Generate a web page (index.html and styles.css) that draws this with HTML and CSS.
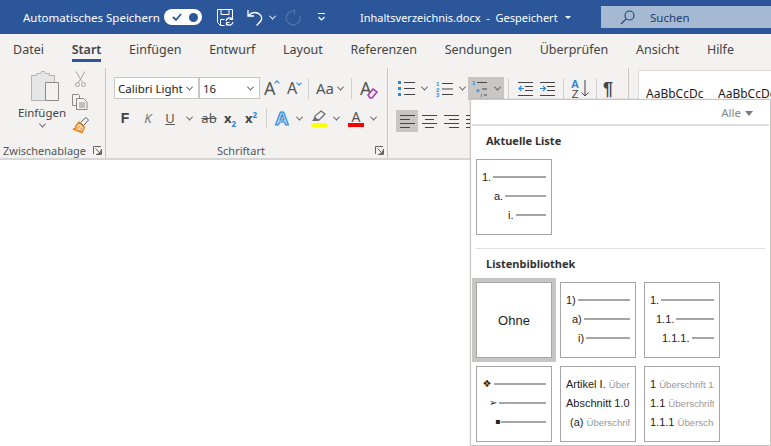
FILE: index.html
```html
<!DOCTYPE html>
<html lang="de">
<head>
    <meta charset="UTF-8">
    <title>Inhaltsverzeichnis.docx</title>
    <link rel="stylesheet" href="styles.css">
</head>
<body>
<div class="titlebar">
    <span class="autosave">Automatisches Speichern</span>
    <span class="toggle">
        <svg width="12" height="10" viewBox="0 0 12 10"><path d="M2 5l3 3 5-6" fill="none" stroke="#2b579a" stroke-width="1.8"/></svg>
        <i class="toggle-dot"></i>
    </span>
    <svg class="qa-save" width="17" height="17" viewBox="0 0 17 17" fill="none" stroke="#fff"><path d="M.5.5h15v8M.5.5v13l3 3h4M4 .5v5h8v-5M3.500 16.500v-6h4"/><path d="M9 12a3.500 3.500 0 0 1 6-2M16 13a3.500 3.500 0 0 1-6 2M15.500 7.500v3h-3M9.500 16.500v-3h3" stroke-width="1.200"/></svg>
    <svg class="qa-undo" width="18" height="17" viewBox="0 0 18 17" fill="none" stroke="#fff" stroke-width="1.300"><path d="M1 1v6h6M1.500 6.500c2-2 4-3 6-3 4 0 8 3 7 7-.5 2-3 4-5 6"/></svg>
    <i class="chev chev-white qa-undo-chev"></i>
    <svg class="qa-redo" width="17" height="17" viewBox="0 0 17 17" fill="none" stroke="#4f74ab" stroke-width="1.300"><path d="M10 2a7 7 0 1 0 6 5M10.500 .5v5"/></svg>
    <svg class="qa-more" width="9" height="8" viewBox="0 0 9 8" fill="none" stroke="#fff"><path d="M1 .5h7M1.500 4l3 3 3-3" stroke-width="1.200"/></svg>
    <span class="doc-name">Inhaltsverzeichnis.docx&nbsp; -&nbsp; Gespeichert</span>
    <i class="caret caret-white"></i>
    <div class="search">
        <svg width="15" height="15" viewBox="0 0 15 15" fill="none" stroke="#1f3d6e" stroke-width="1.100"><circle cx="9.500" cy="5.500" r="4.500"/><path d="M6.200 8.800L1 14"/></svg>
        <span>Suchen</span>
    </div>
</div>

<ul class="tabs">
    <li>Datei</li>
    <li class="active">Start</li>
    <li>Einfügen</li>
    <li>Entwurf</li>
    <li>Layout</li>
    <li>Referenzen</li>
    <li>Sendungen</li>
    <li>Überprüfen</li>
    <li>Ansicht</li>
    <li>Hilfe</li>
</ul>

<div class="ribbon">
    <section class="group group-clip">
        <div class="clip-body">
            <div class="paste">
                <svg class="paste-icon" width="28" height="30" viewBox="0 0 28 30"><path d="M.5 4.500h5v-2h4l1-2h3l1 2h4v2h5v25H.5z" fill="#e6e6e6" stroke="#b3b3b3"/><path d="M14.500 11.500h13v18h-13z" fill="#f3f2f1" stroke="#8c8c8c"/></svg>
                <span class="paste-label">Einfügen</span>
                <i class="chev"></i>
            </div>
            <div class="clip-tools">
                <svg width="11" height="16" viewBox="0 0 11 16" fill="none" stroke="#a6a6a6"><path d="M1 .5l6.500 11M10 .5L3.500 11.500"/><circle cx="2.500" cy="13.500" r="2"/><circle cx="8.500" cy="13.500" r="2"/></svg>
                <svg width="16" height="16" viewBox="0 0 16 16" fill="none" stroke="#8a8a8a"><path d="M.5.500h6l1 1v3M.5.500v11h4"/><path d="M4.500 4.500h7l3.500 3.500v7.500H4.500zM7 9h6M7 11h6M7 13h6" fill="#f3f2f1"/></svg>
                <svg width="17" height="17" viewBox="0 0 17 17"><path d="M14 .5l2.500 2.500-5 5.500-3-3z" fill="#fff" stroke="#555"/><path d="M7 5l5.500 5.500-2.500 5L1 12c2.500 0 3.500-1 2.500-2.500z" fill="#fcd9ac" stroke="#e8801a" stroke-width="1.400"/><path d="M4.500 12l3-3M7.500 14l2.500-3" stroke="#e8801a"/></svg>
            </div>
        </div>
        <div class="group-label label-clip">
            <span>Zwischenablage</span>
            <svg class="launcher" width="9" height="9" viewBox="0 0 9 9" fill="none" stroke="#666"><path d="M.5 8V.5H8M8.500 3v5.500H3M2.500 2.500l5 5M7.500 4.500v3h-3"/></svg>
        </div>
    </section>

    <section class="group group-font">
        <div class="row font-row1">
            <div class="combo combo-font">Calibri Light<i class="chev"></i></div>
            <div class="combo combo-size">16<i class="chev"></i></div>
            <span class="glyph glyph-big grow">A<i class="tick up"></i></span>
            <span class="glyph glyph-mid shrink">A<i class="tick down"></i></span>
            <i class="sep sep-case"></i>
            <span class="glyph glyph-case">Aa</span><i class="chev"></i>
            <i class="sep sep-clear"></i>
            <span class="glyph glyph-clear">A
                <svg class="eraser" width="11" height="11" viewBox="0 0 11 11"><path d="M1 7l5-6 4 3-5 6H3z" fill="#f3e6f5" stroke="#a33aa8" stroke-width="1.500"/></svg>
            </span>
        </div>
        <div class="row font-row2">
            <b class="fmt fmt-f">F</b>
            <span class="fmt fmt-k">K</span>
            <span class="fmt fmt-u">U</span><i class="chev"></i>
            <span class="fmt fmt-s">ab</span>
            <span class="fmt fmt-x"><b>x</b><sub>2</sub></span>
            <span class="fmt fmt-x"><b>x</b><sup>2</sup></span>
            <i class="sep sep-fx"></i>
            <span class="fx-a">A</span><i class="chev"></i>
            <span class="swatch swatch-yellow">
                <svg width="16" height="13" viewBox="0 0 16 13"><path d="M10 1l4 3-6 6H3l1-4z" fill="none" stroke="#707070" stroke-width="1.300"/><path d="M1 11h6l1-1-4-3z" fill="#707070"/></svg>
            </span><i class="chev"></i>
            <span class="swatch swatch-red"><span class="swatch-a">A</span></span><i class="chev"></i>
        </div>
        <div class="group-label label-font">
            <span>Schriftart</span>
            <svg class="launcher" width="9" height="9" viewBox="0 0 9 9" fill="none" stroke="#666"><path d="M.5 8V.5H8M8.500 3v5.500H3M2.500 2.500l5 5M7.500 4.500v3h-3"/></svg>
        </div>
    </section>

    <section class="group group-para">
        <div class="row para-row1">
            <svg width="17" height="15" viewBox="0 0 17 15"><path d="M0 0h3v3H0zM0 6h3v3H0zM0 12h3v3H0z" fill="#2b88d8"/><path d="M6 1.500h11M6 7.500h11M6 13.500h11" stroke="#444"/></svg>
            <i class="chev chev-bullet"></i>
            <svg class="list-svg" width="17" height="16" viewBox="0 0 17 16"><text x="0" y="5">1</text><text x="0" y="10.500">2</text><text x="0" y="16">3</text><path d="M6 2.500h11M6 8h11M6 13.500h11" stroke="#444"/></svg>
            <i class="chev chev-num"></i>
            <span class="multi">
                <svg class="list-svg" width="17" height="18" viewBox="0 0 17 18"><text x="1" y="5">1</text><text x="5" y="11.500">a</text><text x="9.500" y="17">i</text><path d="M6 2.500h10M11 9h5M13 15h3" stroke="#444"/></svg>
                <i class="chev"></i>
            </span>
            <i class="sep sep-multi"></i>
            <svg width="15" height="14" viewBox="0 0 15 14"><path d="M0 .5h15M7 4.500h8M7 8.500h8M0 13.500h15" stroke="#444"/><path d="M1 6.500h5M3.500 4L1 6.500 3.500 9" fill="none" stroke="#2b88d8" stroke-width="1.200"/></svg>
            <svg class="indent-more" width="15" height="14" viewBox="0 0 15 14"><path d="M0 .5h15M7 4.500h8M7 8.500h8M0 13.500h15" stroke="#444"/><path d="M0 6.500h5M3 4l2.500 2.500L3 9" fill="none" stroke="#2b88d8" stroke-width="1.200"/></svg>
            <i class="sep sep-sort"></i>
            <span class="sort"><span class="sort-a">A</span><span class="sort-z">Z</span></span>
            <svg class="sort-arrow" width="8" height="17" viewBox="0 0 8 17" fill="none" stroke="#444"><path d="M4 0v16M.5 12.500L4 16l3.500-3.500"/></svg>
            <i class="sep sep-pil"></i>
            <span class="pilcrow">¶</span>
        </div>
        <div class="row para-row2">
            <span class="align align-on"><svg width="15" height="13" viewBox="0 0 15 13"><path d="M0 .5h15M0 4.500h10M0 8.500h15M0 12.500h10" stroke="#444"/></svg></span>
            <span class="align"><svg width="15" height="13" viewBox="0 0 15 13"><path d="M0 .5h15M3 4.500h9M0 8.500h15M3 12.500h9" stroke="#444"/></svg></span>
            <span class="align"><svg width="15" height="13" viewBox="0 0 15 13"><path d="M0 .5h15M5 4.500h10M0 8.500h15M5 12.500h10" stroke="#444"/></svg></span>
            <span class="align"><svg width="15" height="13" viewBox="0 0 15 13"><path d="M0 .5h15M0 4.500h15M0 8.500h15M0 12.500h15" stroke="#444"/></svg></span>
        </div>
    </section>

    <section class="gallery">
        <span>AaBbCcDc</span>
        <span>AaBbCcDc</span>
    </section>
</div>

<div class="panel">
    <div class="panel-head">Alle<i class="caret caret-grey"></i></div>
    <h3>Aktuelle Liste</h3>
    <div class="tiles">
        <div class="tile">
            <div class="ln"><span>1.</span><i></i></div>
            <div class="ln l2"><span>a.</span><i></i></div>
            <div class="ln l3"><span>i.</span><i></i></div>
        </div>
    </div>
    <div class="panel-sep"></div>
    <h3 class="lib-title">Listenbibliothek</h3>
    <div class="tiles tiles-lib">
        <div class="tile tile-none">Ohne</div>
        <div class="tile">
            <div class="ln"><span>1)</span><i></i></div>
            <div class="ln l-a"><span>a)</span><i></i></div>
            <div class="ln l-i"><span>i)</span><i></i></div>
        </div>
        <div class="tile">
            <div class="ln"><span>1.</span><i></i></div>
            <div class="ln l-11"><span>1.1.</span><i></i></div>
            <div class="ln l-111"><span>1.1.1.</span><i></i></div>
        </div>
        <div class="tile">
            <div class="ln"><span class="bul bul-d">❖</span><i></i></div>
            <div class="ln l-arrow"><span class="bul bul-a">➢</span><i></i></div>
            <div class="ln l-sq"><span class="bul bul-s">▪</span><i></i></div>
        </div>
        <div class="tile">
            <div class="ln"><span class="clip">Artikel I. <em>Überschrift</em></span></div>
            <div class="ln"><span class="clip">Abschnitt 1.01</span></div>
            <div class="ln l-par"><span class="clip">(a) <em>Überschrift</em></span></div>
        </div>
        <div class="tile">
            <div class="ln"><span class="clip">1 <em>Überschrift 1-</em></span></div>
            <div class="ln"><span class="clip">1.1 <em>Überschrift</em></span></div>
            <div class="ln"><span class="clip">1.1.1 <em>Überschrift</em></span></div>
        </div>
    </div>
</div>
</body>
</html>
```

FILE: styles.css
```css
* {
    margin: 0;
    padding: 0;
    box-sizing: border-box;
    list-style: none;
}

body {
    width: 771px;
    height: 446px;
    overflow: hidden;
    position: relative;
    background: #fff;
    font-family: "Noto Sans", "Open Sans", sans-serif;
    font-size: 11.500px;
    color: #444;
}

/* title bar */
.titlebar {
    height: 34px;
    background: #2b579a;
    color: #fff;
    display: flex;
    align-items: center;
    padding-left: 23px;
}

.autosave {
    width: 141px;
    white-space: nowrap;
}

.toggle {
    width: 38px;
    height: 16px;
    border-radius: 8px;
    background: #fff;
    display: flex;
    align-items: center;
    justify-content: space-between;
    padding: 0 4px 0 7px;
}

.toggle-dot {
    width: 9px;
    height: 9px;
    border-radius: 50%;
    background: #2b579a;
}

.qa-save { margin-left: 15px; }
.qa-undo { margin-left: 13px; }
.qa-undo-chev { margin-left: 5px; }
.qa-redo { margin-left: 9px; }
.qa-more { margin-left: 16px; }

.doc-name {
    margin-left: 34px;
    white-space: nowrap;
    font-size: 11px;
}

.search {
    position: absolute;
    left: 601px;
    top: 6px;
    width: 170px;
    height: 22px;
    background: #a5b9d3;
    color: #1f3d6e;
    display: flex;
    align-items: center;
    gap: 15px;
    padding-left: 19px;
}

/* small arrows */
.chev {
    display: inline-block;
    flex: none;
    width: 5px;
    height: 5px;
    border-right: 1px solid #555;
    border-bottom: 1px solid #555;
    transform: rotate(45deg) translate(-1px, -1px);
}

.chev-white { border-color: #fff; }

.caret {
    display: inline-block;
    width: 0;
    height: 0;
}

.caret-white {
    border-left: 3px solid transparent;
    border-right: 3px solid transparent;
    border-top: 3px solid #fff;
    margin-left: 7px;
}

.caret-grey {
    border-left: 4px solid transparent;
    border-right: 4px solid transparent;
    border-top: 5px solid #7a7a7a;
    margin-left: 4px;
    vertical-align: 1px;
}

/* tabs */
.tabs {
    height: 32px;
    background: #f3f2f1;
    display: flex;
    padding-left: 13px;
    gap: 27.700px;
    font-size: 12.500px;
}

.tabs li {
    line-height: 31px;
    height: 28px;
    white-space: nowrap;
}

.tabs .active {
    font-weight: 600;
    border-bottom: 3px solid #2b579a;
}

/* ribbon */
.ribbon {
    height: 94px;
    background: #f3f2f1;
    border-bottom: 2px solid #d8d6d4;
    display: flex;
}

.group {
    position: relative;
    border-right: 1px solid #c8c6c4;
    margin-top: 2px;
    flex: none;
}

.group-clip { width: 106px; }
.group-font { width: 282px; padding: 9px 0 0 8px; }
.group-para { width: 241px; padding: 9px 0 0 8px; }

.clip-body {
    display: flex;
    padding: 3px 0 0 18px;
    gap: 5px;
}

.paste {
    width: 48px;
    display: flex;
    flex-direction: column;
    align-items: center;
}

.paste-icon { margin-left: 5px; }
.paste-label { margin-top: 4px; }
.paste .chev { margin-top: 3px; }

.clip-tools {
    display: flex;
    flex-direction: column;
    align-items: center;
    gap: 7px;
    width: 18px;
}

.group-label {
    position: absolute;
    bottom: 0;
    left: 0;
    right: 0;
    height: 15px;
    line-height: 15px;
    font-size: 11px;
    color: #555;
}

.label-clip { padding-left: 3px; }
.label-font { text-align: center; padding-right: 11px; }

.launcher {
    position: absolute;
    right: 3px;
    top: 3px;
}

.row {
    display: flex;
    align-items: center;
}

.font-row1 { height: 22px; }

.combo {
    height: 22px;
    background: #fff;
    border: 1px solid #c8c6c4;
    display: flex;
    align-items: center;
    justify-content: space-between;
    padding: 0 6px 0 3px;
    font-size: 11.500px;
    color: #222;
}

.combo-font { width: 85px; }
.combo-size { width: 61px; }

.glyph {
    position: relative;
    color: #555;
    line-height: 1;
    display: inline-block;
}

.glyph-big { font-size: 18px; margin-left: 4px; width: 23px; }
.glyph-mid { font-size: 16px; width: 21px; }
.glyph-case { font-size: 15px; margin-right: 4px; }
.glyph-clear { font-size: 18px; width: 17px; }

.tick {
    position: absolute;
    top: 2px;
    left: 11px;
    width: 4px;
    height: 4px;
    border-left: 1px solid #2b88d8;
    border-top: 1px solid #2b88d8;
    transform: rotate(45deg);
}

.tick.down { transform: rotate(225deg); top: 1px; left: 10px; }

.eraser {
    position: absolute;
    left: 7px;
    top: 9px;
}

.sep {
    display: inline-block;
    flex: none;
    width: 1px;
    height: 21px;
    background: #d2d0ce;
}

.sep-case { margin-right: 7px; }
.sep-clear { margin: 0 8px 0 8px; }

.font-row2 {
    height: 22px;
    margin-top: 8px;
}

.fmt {
    display: inline-block;
    font-size: 13px;
    color: #555;
    text-align: center;
    line-height: 1;
}

.fmt-f { width: 14px; margin-left: 4px; font-size: 14px; font-family: "Liberation Sans", sans-serif; color: #444; }
.fmt-k { width: 14px; margin-left: 9px; font-style: italic; color: #777; }
.fmt-u { width: 14px; margin: 0 10px 0 8px; text-decoration: underline; }
.fmt-s { width: 16px; margin: 0 0 0 9px; text-decoration: line-through; }

.fmt-x {
    width: 16px;
    margin-left: 5px;
    color: #444;
    position: relative;
}

.fmt-x sub, .fmt-x sup {
    font-size: 8px;
    color: #2b88d8;
    font-weight: 700;
    line-height: 0;
}

.sep-fx { margin: 0 8px 0 7px; }

.fx-a {
    width: 16px;
    margin-right: 6px;
    font-size: 19px;
    font-weight: 700;
    line-height: 1;
    color: #cfe6f7;
    -webkit-text-stroke: 1.200px #2b88d8;
    font-family: "Liberation Sans", sans-serif;
}

.swatch {
    width: 16px;
    height: 17px;
    margin: 0 7px 0 9px;
    display: flex;
    align-items: flex-start;
    justify-content: center;
    flex: none;
}

.swatch-yellow { border-bottom: 4px solid #ff0; }
.swatch-red { border-bottom: 4px solid #f00; }

.swatch-a {
    font-size: 14px;
    line-height: 14px;
    color: #555;
}

/* paragraph */
.para-row1 { height: 23px; padding-left: 2px; }
.chev-bullet { margin: 0 9px 0 7px; }
.chev-num { margin: 0 3px 0 7px; }

.list-svg text {
    font-family: "Liberation Sans", sans-serif;
    font-size: 6px;
    font-weight: 700;
    fill: #2b88d8;
}

.multi {
    width: 36px;
    height: 23px;
    background: #c8c6c4;
    display: flex;
    align-items: center;
    gap: 7px;
    padding-left: 3px;
    flex: none;
}

.sep-multi { margin: 0 9px 0 4px; }
.indent-more { margin-left: 7px; }
.sep-sort { margin: 0 6px 0 8px; }

.sort {
    width: 10px;
    display: flex;
    flex-direction: column;
    align-items: center;
    font-size: 11px;
    line-height: 10px;
    font-weight: 700;
    font-family: "Liberation Sans", sans-serif;
}

.sort-a { color: #2b88d8; }
.sort-z { color: #444; font-weight: 400; }
.sort-arrow { margin-left: 1px; }
.sep-pil { margin: 0 6px 0 7px; }

.pilcrow {
    font-size: 18px;
    font-family: "Liberation Sans", sans-serif;
    font-weight: 700;
    color: #444;
    line-height: 1;
}

.para-row2 {
    height: 22px;
    margin-top: 10px;
}

.align {
    width: 22px;
    height: 22px;
    display: flex;
    align-items: center;
    justify-content: center;
    flex: none;
}

.align-on { background: #c8c6c4; }

/* style gallery */
.gallery {
    margin: 4px 0 0 9px;
    flex: 1;
    background: #fff;
    border: 1px solid #dcdad8;
    border-right: 0;
    display: flex;
    gap: 14px;
    padding: 14px 0 0 7px;
    overflow: hidden;
    height: 70px;
    color: #222;
    font-size: 12px;
    white-space: nowrap;
}

.gallery span {
    display: block;
    flex: none;
    width: 58px;
    overflow: hidden;
}

/* list menu */
.panel {
    position: absolute;
    left: 470px;
    top: 99px;
    width: 301px;
    height: 347px;
    background: #fff;
    border: 1px solid #c8c6c4;
    box-shadow: 0 0 2px rgba(0, 0, 0, .15);
    font-family: "Liberation Sans", sans-serif;
    color: #222;
}

.panel-head {
    height: 26px;
    margin: 0 1px;
    border-bottom: 2px solid #e1dfdd;
    text-align: right;
    padding-right: 16px;
    line-height: 26px;
    font-family: "Noto Sans", sans-serif;
    font-size: 11.500px;
    color: #888;
}

.panel h3 {
    font-family: "Noto Sans", sans-serif;
    font-size: 11px;
    font-weight: 700;
    color: #333;
    padding-left: 15px;
    margin-top: 6px;
    line-height: 18px;
}

.tiles {
    display: grid;
    grid-template-columns: repeat(3, 76px);
    gap: 8px;
    margin: 9px 0 0 5px;
}

.tile {
    width: 76px;
    height: 76px;
    border: 1px solid #a6a6a6;
    padding: 7px 5px 0 5px;
    font-size: 11px;
    overflow: hidden;
}

.tile-none {
    display: flex;
    align-items: center;
    justify-content: center;
    font-size: 13px;
    outline: 4px solid #c8c6c4;
    padding: 0;
}

.panel-sep {
    height: 1px;
    background: #e1dfdd;
    margin: 13px 5px 0 5px;
}

.lib-title { margin-top: 5px; }

.tiles-lib { margin-top: 9px; }

.ln {
    display: flex;
    align-items: center;
    gap: 2px;
    height: 19px;
    white-space: nowrap;
}

.ln i {
    flex: 1;
    height: 2px;
    background: #a6a6a6;
}

.ln em {
    font-style: normal;
    font-size: 9.600px;
    color: #999;
}

.clip {
    display: block;
    overflow: hidden;
}

.bul {
    font-family: "DejaVu Sans", sans-serif;
    text-align: center;
    font-size: 10px;
}

.bul-d { width: 10px; }
.bul-a { width: 8px; }
.bul-s { width: 4px; font-size: 8px; }

.l2 { padding-left: 12px; }
.l3 { padding-left: 26px; }
.l-a { padding-left: 6px; }
.l-i { padding-left: 12px; }
.l-11 { padding-left: 6px; }
.l-111 { padding-left: 12px; }
.l-arrow { padding-left: 7px; }
.l-sq { padding-left: 13px; }
.l-par { padding-left: 4px; }
```
